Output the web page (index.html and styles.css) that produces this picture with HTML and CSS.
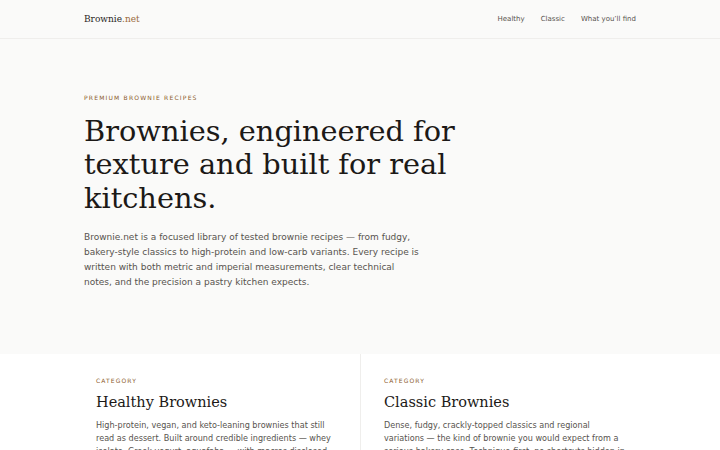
FILE: index.html
```html
<!DOCTYPE html>
<html lang="en">
<head>
<meta charset="utf-8">
<title>Brownie.net</title>
<link rel="stylesheet" href="styles.css">
</head>
<body>
<header class="site-header">
  <div class="container header-inner">
    <a class="logo" href="#">Brownie<span class="logo-tld">.net</span></a>
    <nav class="nav">
      <a href="#">Healthy</a>
      <a href="#">Classic</a>
      <a href="#">What you’ll find</a>
    </nav>
  </div>
</header>
<main>
  <section class="hero">
    <div class="container">
      <p class="eyebrow">Premium brownie recipes</p>
      <h1 class="hero-title">Brownies, engineered for texture and built for real kitchens.</h1>
      <p class="hero-lead">Brownie.net is a focused library of tested brownie recipes — from fudgy, bakery-style classics to high-protein and low-carb variants. Every recipe is written with both metric and imperial measurements, clear technical notes, and the precision a pastry kitchen expects.</p>
    </div>
  </section>
  <section class="categories">
    <div class="container cat-grid">
      <article class="cat cat-first">
        <p class="cat-label">Category</p>
        <h2 class="cat-title">Healthy Brownies</h2>
        <p class="cat-text">High-protein, vegan, and keto-leaning brownies that still read as dessert. Built around credible ingredients — whey isolate, Greek yogurt, aquafaba — with macros disclosed per serving.</p>
      </article>
      <article class="cat cat-second">
        <p class="cat-label">Category</p>
        <h2 class="cat-title">Classic Brownies</h2>
        <p class="cat-text">Dense, fudgy, crackly-topped classics and regional variations — the kind of brownie you would expect from a serious bakery case. Technique-first, no shortcuts hidden in the method.</p>
      </article>
    </div>
  </section>
</main>
</body>
</html>
```
FILE: styles.css
```css
* { box-sizing: border-box; }
html, body { margin: 0; padding: 0; }
body {
  background: #fafaf9;
  color: #1c1917;
  font-family: "DejaVu Sans", sans-serif;
}
a { text-decoration: none; color: inherit; }
.container {
  width: 552px;
  margin: 0 auto;
}
.site-header {
  height: 39px;
  border-bottom: 1px solid #efeeec;
}
.header-inner {
  height: 38px;
  display: flex;
  align-items: center;
  justify-content: space-between;
}
.logo {
  font-family: "DejaVu Serif", serif;
  font-size: 9px;
  color: #292524;
}
.logo-tld { color: #9a6a3c; }
.nav {
  display: flex;
  gap: 16px;
  font-size: 7px;
  color: #57534e;
}
.hero {
  padding: 55px 0 64px;
}
.eyebrow {
  margin: 0 0 13.5px;
  font-size: 6px;
  letter-spacing: 1.2px;
  text-transform: uppercase;
  color: #8b5a2b;
}
.hero-title {
  margin: 0 0 15px;
  font-family: "DejaVu Serif", serif;
  font-weight: 400;
  font-size: 28.8px;
  line-height: 33.5px;
  width: 400px;
  color: #1c1917;
}
.hero-lead {
  margin: 0;
  width: 338px;
  font-size: 9px;
  line-height: 15px;
  color: #57534e;
}
.categories {
  background: #ffffff;
}
.cat-grid {
  display: grid;
  grid-template-columns: 1fr 1fr;
}
.cat { padding: 23px 18px 20px 12px; }
.cat-second {
  border-left: 1px solid #efeeec;
  padding-left: 23px;
  padding-right: 6px;
}
.cat-label {
  margin: 0 0 9px;
  font-size: 6px;
  letter-spacing: 1.1px;
  text-transform: uppercase;
  color: #8b5a2b;
}
.cat-title {
  margin: 0 0 8px;
  font-family: "DejaVu Serif", serif;
  font-weight: 400;
  font-size: 14.5px;
  line-height: 18px;
  color: #1c1917;
}
.cat-text {
  margin: 0;
  font-size: 8.1px;
  line-height: 13px;
  color: #57534e;
}
```
